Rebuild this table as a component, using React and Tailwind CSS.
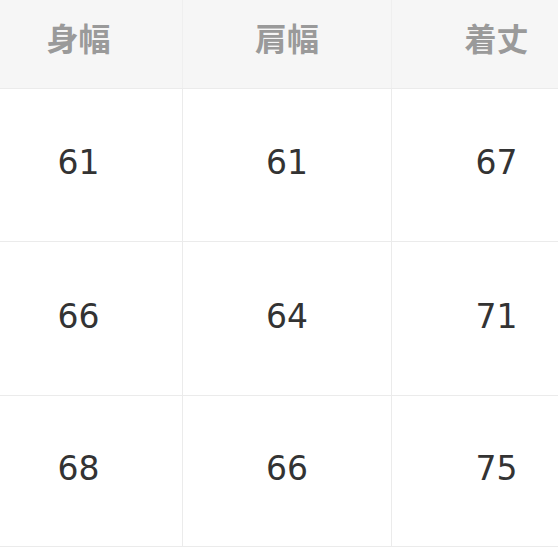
import React from "react";

const heads = ["身幅", "肩幅", "着丈"];
const rows = [
  ["61", "61", "67"],
  ["66", "64", "71"],
  ["68", "66", "75"],
];
const rowH = ["h-[153px]", "h-[154px]", "h-[151px]"];

export default function App() {
  return (
    <div className="w-[558px] h-[558px] overflow-hidden bg-white">
      <div className="ml-[-25px] w-[626px]">
        <div className="grid grid-cols-[208px_209px_209px] h-[89px] bg-[#f6f6f6] border-b border-[#ebebeb]">
          {heads.map((h, i) => (
            <div
              key={h}
              className={`flex justify-center pt-[14px] ${i < 2 ? "border-r border-[#efefef]" : ""}`}
            >
              <span
                className="text-[32px] leading-[46px] font-bold text-[#9a9a9a]"
                style={{ fontFamily: '"Noto Sans CJK JP", sans-serif' }}
              >
                {h}
              </span>
            </div>
          ))}
        </div>
        {rows.map((r, ri) => (
          <div
            key={ri}
            className={`grid grid-cols-[208px_209px_209px] ${rowH[ri]} border-b border-[#ebebeb]`}
          >
            {r.map((v, i) => (
              <div
                key={i}
                className={`flex items-center justify-center pb-[4px] ${i < 2 ? "border-r border-[#ebebeb]" : ""}`}
              >
                <span
                  className="text-[33px] text-[#333333]"
                  style={{ fontFamily: '"DejaVu Sans", sans-serif' }}
                >
                  {v}
                </span>
              </div>
            ))}
          </div>
        ))}
      </div>
    </div>
  );
}
